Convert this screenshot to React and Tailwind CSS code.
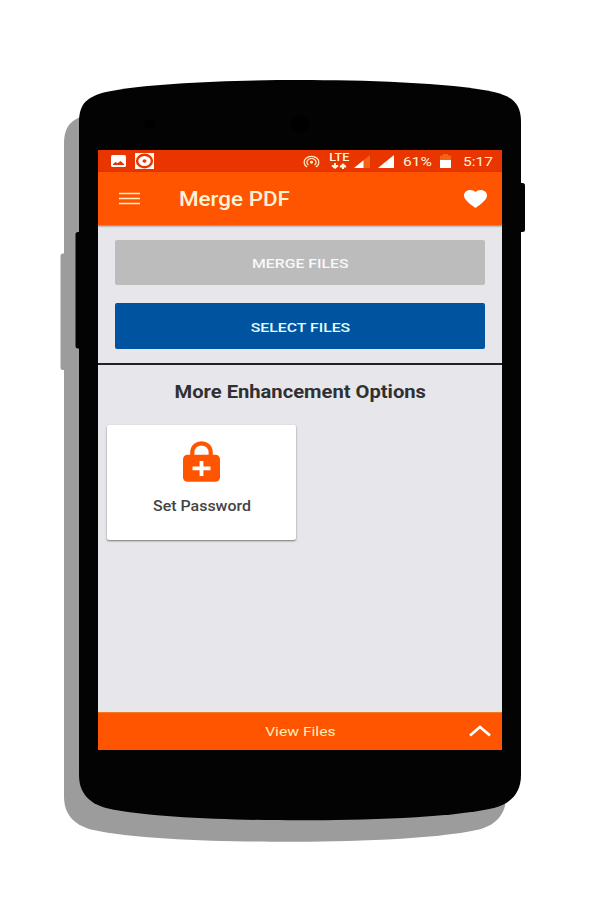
const BODY =
  'M79 122 C79 103 88 96.500 106 92 C150 82.500 240 80 300 80 C360 80 450 82.500 494 92 C512 96.500 521 103 521 122 V775 C521 792 512 803 494 808 C450 818 360 820.300 300 820.300 C240 820.300 150 818 106 808 C88 803 79 792 79 775 Z';

function PhoneFrame() {
  return (
    <svg className="absolute inset-0" width="600" height="900" viewBox="0 0 600 900">
      <g fill="#9c9c9c" transform="translate(-15 21.500)">
        <path d={BODY} />
        <rect x="75.500" y="232" width="10" height="116.500" rx="2.500" />
      </g>
      <g fill="#030303">
        <path d={BODY} />
        <rect x="75.500" y="232" width="10" height="116.500" rx="2.500" />
        <rect x="515" y="183" width="10" height="49" rx="2.500" />
      </g>
      <ellipse cx="149.500" cy="124.500" rx="5.500" ry="4.500" fill="#000" />
      <circle cx="300" cy="124" r="9" fill="#000" />
    </svg>
  );
}

function StatusBar() {
  return (
    <div className="flex h-[22px] shrink-0 items-center bg-[#e93500] pl-[13px] text-[#fff3d6]">
      <svg className="shrink-0" width="15" height="12" viewBox="0 0 15 12">
        <rect width="15" height="12" rx="1.500" fill="#fff" />
        <path d="M2 10 V9 L4.500 7 L6.500 8.300 L9.500 6 L13 9 V10 Z" fill="#e93500" />
      </svg>
      <svg className="ml-[9px] shrink-0" width="19" height="16" viewBox="0 0 19 16">
        <rect width="19" height="16" fill="#fff8ee" />
        <ellipse cx="9.500" cy="8" rx="7.400" ry="6.200" fill="#fff" stroke="#e93500" strokeWidth="2.400" />
        <ellipse cx="9.500" cy="8" rx="2" ry="1.700" fill="#e93500" />
      </svg>
      <svg className="mt-px ml-[149px] shrink-0" width="17" height="13" viewBox="0 0 17 13" fill="none" stroke="#ffe9bd" strokeWidth="1.300">
        <path d="M4.200 12 A7.400 5.900 0 1 1 12.800 12" />
        <path d="M5.500 10 A4.600 3.600 0 1 1 11.500 10" />
        <ellipse cx="8.500" cy="7.300" rx="1" ry="0.800" fill="#ffe9bd" />
      </svg>
      <div className="ml-[9px] flex h-[16px] w-[20px] shrink-0 flex-col items-center">
        <span className="block origin-center scale-x-[1.2] font-['Roboto',sans-serif] text-[10.500px] leading-[10px] font-medium">LTE</span>
        <svg width="16" height="6" viewBox="0 0 16 6" fill="#fff3d6">
          <path d="M3 0 H5 V2 H7.200 V3.500 L4 6 L0.800 3.500 V2 H3 Z M11 6 H13 V4.500 H15.200 V3 L12 0.300 L8.800 3 V4.500 H11 Z" />
        </svg>
      </div>
      <svg className="mt-px ml-[5px] shrink-0" width="16" height="13" viewBox="0 0 16 13">
        <path d="M0 13 L16 0 V13 Z" fill="#f26315" />
        <path d="M0 13 L9.500 5.300 V13 Z" fill="#fff" />
      </svg>
      <svg className="mt-px ml-[8px] shrink-0" width="16" height="13" viewBox="0 0 16 13">
        <path d="M0 13 L16 0 V13 Z" fill="#fff" />
      </svg>
      <div className="mt-[2px] ml-[9px] w-[30px] shrink-0">
        <span className="block w-max origin-left scale-x-[1.2] font-['Roboto',sans-serif] text-[13px] leading-[22px]">61%</span>
      </div>
      <svg className="ml-[7px] shrink-0" width="11" height="14" viewBox="0 0 11 14">
        <path d="M0 1.500 H3 V0 H8 V1.500 H11 V6 H0 Z" fill="#f26315" />
        <rect y="6" width="11" height="8" fill="#fff" />
      </svg>
      <div className="mt-[2px] ml-[12px] w-[32px] shrink-0">
        <span className="block w-max origin-left scale-x-[1.2] font-['Roboto',sans-serif] text-[13px] leading-[22px]">5:17</span>
      </div>
    </div>
  );
}

function AppBar() {
  return (
    <header className="flex h-[53px] shrink-0 items-center bg-[#ff5500] pr-[15px] pl-[21px] shadow-[0_1px_2px_rgba(0,0,0,0.5)]">
      <svg className="shrink-0" width="21" height="14" viewBox="0 0 21 14">
        <path d="M0 1.500 H21 M0 6.500 H21 M0 11.500 H21" stroke="#fff0c4" strokeWidth="1.600" />
      </svg>
      <h1 className="mt-[2px] ml-[39px] w-max origin-left scale-x-[1.15] font-['Roboto',sans-serif] text-[19.500px] leading-[24px] font-medium text-[#fff3d6]">
        Merge PDF
      </h1>
      <svg className="ml-auto shrink-0" width="23" height="18" viewBox="2 3 20 18.350" preserveAspectRatio="none">
        <path
          fill="#fff"
          d="M12 21.350 l-1.450-1.320 C5.400 15.360 2 12.280 2 8.500 C2 5.420 4.420 3 7.500 3 c1.740 0 3.410.81 4.500 2.090 C13.090 3.810 14.760 3 16.500 3 C19.580 3 22 5.420 22 8.500 c0 3.780-3.400 6.860-8.550 11.540 Z"
        />
      </svg>
    </header>
  );
}

function PasswordCard() {
  return (
    <div className="mt-[22px] ml-[9px] flex h-[115px] w-[189px] shrink-0 flex-col items-center rounded-[2px] bg-white pt-[16px] shadow-[0_1px_2px_rgba(0,0,0,0.5)]">
      <svg width="37" height="41" viewBox="0 0 37 41">
        <path d="M9.300 15 V11.500 C9.300 -0.800 27.700 -0.800 27.700 11.500 V15" fill="none" stroke="#ff5500" strokeWidth="4.200" />
        <rect y="13.700" width="37" height="27" rx="4.500" fill="#ff5500" />
        <path d="M18.500 20 V35 M9.500 27.300 H27.500" stroke="#fff" strokeWidth="3.800" />
      </svg>
      <span className="mt-[14px] block scale-x-[1.14] font-['Roboto',sans-serif] text-[14px] leading-[20px] font-medium text-[#444]">
        Set Password
      </span>
    </div>
  );
}

export default function App() {
  return (
    <div className="relative h-[900px] w-[600px] overflow-hidden bg-white pt-[150px] pl-[98px]">
      <PhoneFrame />
      <div className="relative flex h-[600px] w-[404px] flex-col overflow-hidden bg-[#e7e6eb]">
        <StatusBar />
        <AppBar />
        <section className="flex h-[138px] shrink-0 flex-col gap-[18px] px-[17px] pt-[15px]">
          <button className="flex h-[45px] w-[370px] items-center justify-center rounded-[2px] bg-[#bcbcbc] pt-px">
            <span className="block scale-x-[1.17] font-['Roboto',sans-serif] text-[13.500px] leading-[20px] font-medium text-[#f8f8f8]">MERGE FILES</span>
          </button>
          <button className="flex h-[46px] w-[370px] items-center justify-center rounded-[2px] bg-[#00549f] pt-px">
            <span className="block scale-x-[1.17] font-['Roboto',sans-serif] text-[13.500px] leading-[20px] font-medium text-[#e4fbff]">SELECT FILES</span>
          </button>
        </section>
        <div className="h-[2px] shrink-0 bg-[#222226]" />
        <h2 className="mt-[15px] text-center font-['Roboto',sans-serif] text-[18px] leading-[23px] font-bold text-[#303033]">
          <span className="inline-block scale-x-[1.12]">More Enhancement Options</span>
        </h2>
        <PasswordCard />
        <footer className="mt-auto flex h-[38px] shrink-0 items-center justify-end border-t border-[#f07a20] bg-[#ff5500] pr-[11px]">
          <div className="flex flex-1 justify-center pb-[2px] pl-[33px]">
            <span className="block scale-x-[1.16] font-['Roboto',sans-serif] text-[13.500px] leading-[20px] text-[#ffedb8]">View Files</span>
          </div>
          <svg className="mb-[2px]" width="22" height="12" viewBox="0 0 22 12">
            <path d="M1 10.500 L11 2 L21 10.500" fill="none" stroke="#fff" strokeWidth="2.800" />
          </svg>
        </footer>
      </div>
    </div>
  );
}
